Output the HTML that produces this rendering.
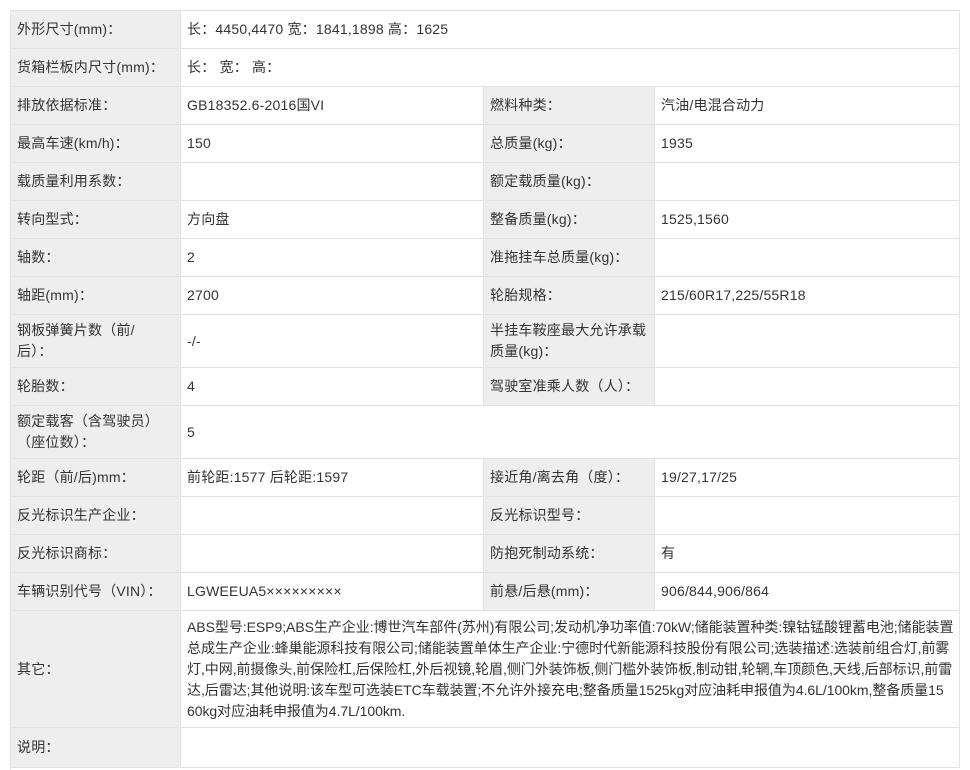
<!DOCTYPE html>
<html><head><meta charset="utf-8"><style>
body{margin:0;background:#fff;width:970px;height:762px;overflow:hidden;font-family:"Liberation Sans","Noto Sans CJK SC",sans-serif;font-size:14px;color:#333}
.c{position:absolute;box-sizing:border-box;border-right:1px solid #e3e3e3;border-bottom:1px solid #e3e3e3;padding:0 6px;display:flex;align-items:center;line-height:21px;white-space:nowrap;letter-spacing:0.2px;overflow:hidden}
.l{background:#eeeeee}
#w{position:absolute;left:10px;top:10px;width:950px;height:760px;border-left:1px solid #e3e3e3;border-top:1px solid #e3e3e3;box-sizing:border-box}
</style></head><body><div id="w"></div>
<div id="t"></div>
<script>
var rows=[
[10,38,["外形尺寸(mm)：","长：4450,4470 宽：1841,1898 高：1625"]],
[48,38,["货箱栏板内尺寸(mm)：","长： 宽： 高："]],
[86,38,["排放依据标准：","GB18352.6-2016国VI","燃料种类：","汽油/电混合动力"]],
[124,38,["最高车速(km/h)：","150","总质量(kg)：","1935"]],
[162,38,["载质量利用系数：","","额定载质量(kg)：",""]],
[200,38,["转向型式：","方向盘","整备质量(kg)：","1525,1560"]],
[238,38,["轴数：","2","准拖挂车总质量(kg)：",""]],
[276,38,["轴距(mm)：","2700","轮胎规格：","215/60R17,225/55R18"]],
[314,53,["钢板弹簧片数（前/<br>后）：","-/-","半挂车鞍座最大允许承载<br>质量(kg)：",""]],
[367,38,["轮胎数：","4","驾驶室准乘人数（人）：",""]],
[405,53,["额定载客（含驾驶员）<br>（座位数）：","5"]],
[458,38,["轮距（前/后)mm：","前轮距:1577 后轮距:1597","接近角/离去角（度）：","19/27,17/25"]],
[496,38,["反光标识生产企业：","","反光标识型号：",""]],
[534,38,["反光标识商标：","","防抱死制动系统：","有"]],
[572,38,["车辆识别代号（VIN）：","LGWEEUA5×××××××××","前悬/后悬(mm)：","906/844,906/864"]],
[610,117,["其它：","ABS型号:ESP9;ABS生产企业:博世汽车部件(苏州)有限公司;发动机净功率值:70kW;储能装置种类:镍钴锰酸锂蓄电池;储能装置<br>总成生产企业:蜂巢能源科技有限公司;储能装置单体生产企业:宁德时代新能源科技股份有限公司;选装描述:选装前组合灯,前雾<br>灯,中网,前摄像头,前保险杠,后保险杠,外后视镜,轮眉,侧门外装饰板,侧门槛外装饰板,制动钳,轮辋,车顶颜色,天线,后部标识,前雷<br>达,后雷达;其他说明:该车型可选装ETC车载装置;不允许外接充电;整备质量1525kg对应油耗申报值为4.6L/100km,整备质量15<br>60kg对应油耗申报值为4.7L/100km."]],
[727,40,["说明：",""]]
];
var h="";
rows.forEach(function(r){
 var t=r[0],ht=r[1],c=r[2];
 if(c.length==4){
  var xs=[[11,181],[181,484],[484,655],[655,960]];
 } else {var xs=[[11,181],[181,960]];}
 c.forEach(function(s,i){
  var st="left:"+xs[i][0]+"px;top:"+(t+1)+"px;width:"+(xs[i][1]-xs[i][0])+"px;height:"+ht+"px;";
  if(i==1&&c.length==2&&ht==117)st+="letter-spacing:-0.05px;";
  h+='<div class="c'+(i%2==0?' l':'')+'" style="'+st+'"><div>'+s+'</div></div>';
 });
});
document.getElementById("t").innerHTML=h;
</script>
</body></html>
